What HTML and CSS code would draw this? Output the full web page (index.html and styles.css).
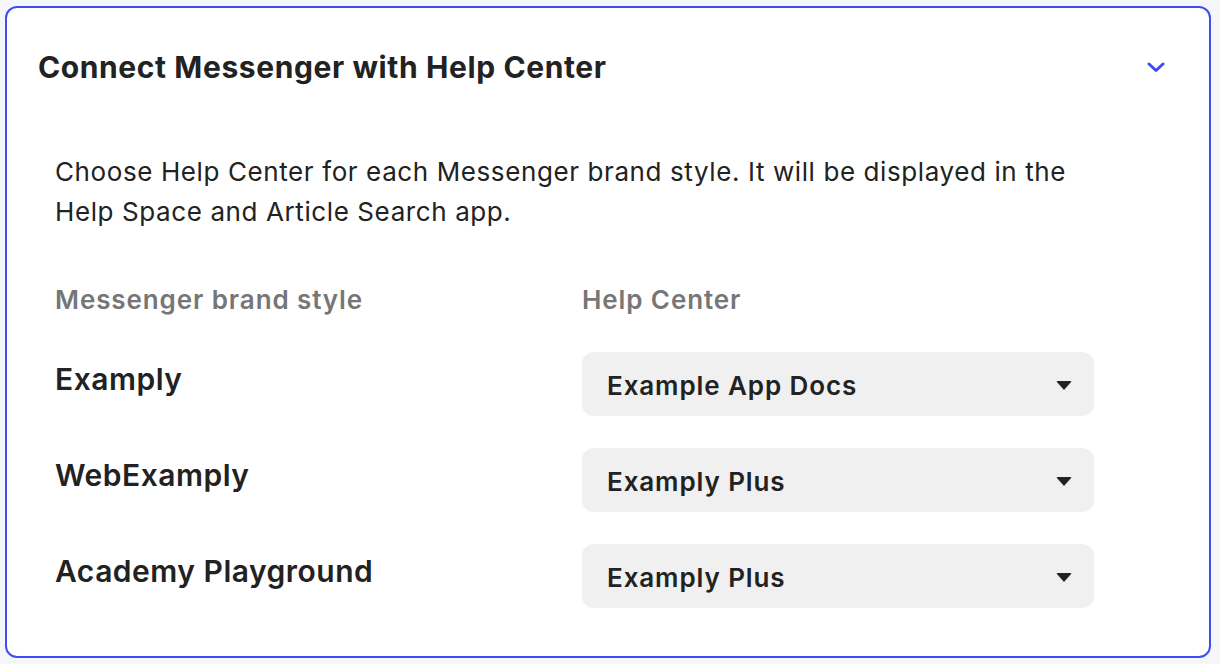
FILE: index.html
```html
<!DOCTYPE html>
<html lang="en">
<head>
    <meta charset="UTF-8">
    <meta name="viewport" content="width=device-width, initial-scale=1.0">
    <title>Help Center settings</title>
    <link rel="stylesheet" href="styles.css">
</head>
<body>

    <!-- 設定カード -->
    <section class="panel">
        <header class="panel-head">
            <h2 class="panel-title">Connect Messenger with Help Center</h2>
            <button class="toggle" type="button" aria-label="Collapse">
                <svg width="18" height="11" viewBox="0 0 18 11">
                    <polyline points="2,2 9,8.5 16,2" fill="none" stroke="#3b4cf0" stroke-width="3" stroke-linecap="round" stroke-linejoin="round"/>
                </svg>
            </button>
        </header>

        <div class="panel-body">
            <p class="desc">Choose Help Center for each Messenger brand style. It will be displayed in the Help Space and Article Search app.</p>

            <div class="mapping">
                <div class="col-head">Messenger brand style</div>
                <div class="col-head">Help Center</div>

                <div class="brand">Examply</div>
                <div class="select">
                    <span>Example App Docs</span>
                    <i class="caret"></i>
                </div>

                <div class="brand">WebExamply</div>
                <div class="select">
                    <span>Examply Plus</span>
                    <i class="caret"></i>
                </div>

                <div class="brand">Academy Playground</div>
                <div class="select">
                    <span>Examply Plus</span>
                    <i class="caret"></i>
                </div>
            </div>
        </div>
    </section>

</body>
</html>
```

FILE: styles.css
```css
/* ページ全体 */
body {
    margin: 0;
    padding: 6px 9px 6px 5px;
    background: #f5f6fa;
    font-family: Inter, "Noto Sans", sans-serif;
    color: #222;
}

/* カード */
.panel {
    background: #fff;
    border: 2px solid #3d4ff0;
    border-radius: 12px;
    height: 652px;
    box-sizing: border-box;
}

.panel-head {
    display: flex;
    justify-content: space-between;
    align-items: center;
    padding: 40px 44px 0 31px;
}

.panel-title {
    margin: 0;
    font-size: 30px;
    line-height: 38px;
    font-weight: 700;
    letter-spacing: 0.6px;
    color: #222;
}

.toggle {
    border: 0;
    background: none;
    padding: 0;
    display: flex;
}

.panel-body {
    padding: 66px 48px 0 48px;
}

.desc {
    margin: 0;
    font-size: 26px;
    line-height: 40px;
    letter-spacing: 0.6px;
    max-width: 1040px;
}

/* ブランドスタイルとヘルプセンターの対応表 */
.mapping {
    display: grid;
    grid-template-columns: 527px 512px;
    row-gap: 32px;
    margin-top: 52px;
}

.col-head {
    font-size: 26px;
    line-height: 32px;
    font-weight: 600;
    letter-spacing: 0.9px;
    color: #767676;
    margin-bottom: 4px;
}

.brand {
    font-size: 30px;
    line-height: 36px;
    font-weight: 600;
    letter-spacing: 0.5px;
    padding-top: 9px;
}

.select {
    height: 64px;
    background: #f0f0f0;
    border-radius: 12px;
    display: flex;
    align-items: center;
    justify-content: space-between;
    padding: 2px 22px 0 25px;
    box-sizing: border-box;
    font-size: 26px;
    font-weight: 600;
    letter-spacing: 0.9px;
}

.caret {
    width: 0;
    height: 0;
    border-left: 8px solid transparent;
    border-right: 8px solid transparent;
    border-top: 9px solid #222;
    border-radius: 2px;
}
```
